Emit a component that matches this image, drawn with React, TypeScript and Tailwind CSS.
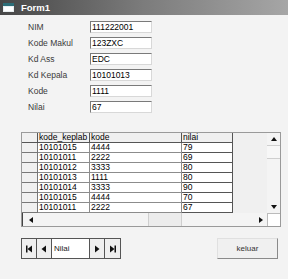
import React from "react";

const rows = [
  ["10101015", "4444", "79"],
  ["10101011", "2222", "69"],
  ["10101012", "3333", "80"],
  ["10101013", "1111", "80"],
  ["10101014", "3333", "90"],
  ["10101015", "4444", "70"],
  ["10101011", "2222", "67"],
];

const fields = [
  ["NIM", "111222001"],
  ["Kode Makul", "123ZXC"],
  ["Kd Ass", "EDC"],
  ["Kd Kepala", "10101013"],
  ["Kode", "1111"],
  ["Nilai", "67"],
];

function Tri({ dir }: { dir: "l" | "r" | "u" | "d" }) {
  const pts =
    dir === "l" ? "4,0 0,3 4,6" : dir === "r" ? "0,0 4,3 0,6" : dir === "u" ? "0,4 3,0 6,4" : "0,0 6,0 3,4";
  const w = dir === "l" || dir === "r" ? 4 : 6;
  const h = dir === "l" || dir === "r" ? 6 : 4;
  return (
    <svg width={w} height={h} viewBox={`0 0 ${w} ${h}`}>
      <polygon points={pts} fill="#111" />
    </svg>
  );
}

function NavIcon({ kind }: { kind: "first" | "prev" | "next" | "last" }) {
  return (
    <svg width="8" height="8" viewBox="0 0 8 8">
      {kind === "first" && (
        <>
          <rect x="1" y="0.5" width="1.5" height="7" fill="#111" />
          <polygon points="7,0.5 2.5,4 7,7.5" fill="#111" />
        </>
      )}
      {kind === "prev" && <polygon points="6,0.5 1.5,4 6,7.5" fill="#111" />}
      {kind === "next" && <polygon points="2,0.5 6.5,4 2,7.5" fill="#111" />}
      {kind === "last" && (
        <>
          <polygon points="1,0.5 5.5,4 1,7.5" fill="#111" />
          <rect x="5.5" y="0.5" width="1.5" height="7" fill="#111" />
        </>
      )}
    </svg>
  );
}

export default function App() {
  return (
    <div
      className="w-[288px] h-[279px] bg-[#f3f3f3] overflow-hidden flex flex-col"
      style={{ fontFamily: '"Liberation Sans", Arial, sans-serif' }}
    >
      {/* Title bar */}
      <div className="h-[15px] flex items-center bg-linear-to-r from-[#474747] via-[#7c7c7c] to-[#a6a6a6] pl-[3px]">
        <svg width="11" height="9" viewBox="0 0 11 9">
          <rect x="0" y="0" width="11" height="9" fill="#e8eef0" />
          <rect x="0" y="0" width="11" height="3" fill="#2d6e78" />
          <rect x="1" y="4" width="9" height="4" fill="#ffffff" />
        </svg>
        <span className="ml-[7px] text-[9.5px] font-bold text-white leading-none">Form1</span>
      </div>

      {/* Fields */}
      <div className="flex flex-col pl-[28px] pt-[4px]">
        {fields.map(([l, v]) => (
          <div key={l} className="flex items-center h-[16px]">
            <div className="w-[62px] text-[8.5px] text-[#3a3a3a] leading-none">{l}</div>
            <div className="w-[62px] h-[12px] bg-white border border-t-[#7a7a7a] border-l-[#7a7a7a] border-b-[#d8d8d8] border-r-[#d8d8d8] flex items-center pl-[1px] text-[8.5px] text-black leading-none">
              {v}
            </div>
          </div>
        ))}
      </div>

      {/* Grid */}
      <div className="ml-[21px] mt-[17px] w-[260px] border border-[#9a9a9a] bg-[#f0f0f0] flex flex-col">
        <div className="flex">
          <div className="w-[245px] flex flex-col">
            <div className="flex h-[10px] text-[8.5px] leading-[9px] text-black">
              <div className="w-[16px] border-r border-b border-[#555]" />
              <div className="w-[52px] pl-[1px] border-r border-b border-[#555] overflow-hidden whitespace-nowrap">kode_keplab</div>
              <div className="w-[92px] pl-[1px] border-r border-b border-[#555]">kode</div>
              <div className="w-[51px] pl-[1px] border-r border-b border-[#555]">nilai</div>
            </div>
            {rows.map((r, i) => (
              <div key={i} className="flex h-[10px] text-[8.5px] leading-[9px] text-black">
                <div className="w-[16px] border-r border-b border-[#777] bg-[#f0f0f0]" />
                <div className="w-[52px] pl-[1px] bg-white border-r border-b border-[#8c8c8c]">{r[0]}</div>
                <div className="w-[92px] pl-[1px] bg-white border-r border-b border-[#8c8c8c]">{r[1]}</div>
                <div className="w-[51px] pl-[1px] bg-white border-r border-b border-[#555]">{r[2]}</div>
              </div>
            ))}
          </div>
          {/* vertical scrollbar */}
          <div className="w-[13px] flex flex-col bg-[#f4f4f4]">
            <div className="h-[12px] flex items-center justify-center"><Tri dir="u" /></div>
            <div className="h-[14px] border-t border-b border-[#cfcfcf] bg-[#f7f7f7]" />
            <div className="flex-1" />
            <div className="h-[12px] flex items-center justify-center"><Tri dir="d" /></div>
          </div>
        </div>
        {/* horizontal scrollbar */}
        <div className="flex h-[13px] bg-[#f4f4f4]">
          <div className="w-[16px] flex items-center justify-center border-l border-[#444]"><Tri dir="l" /></div>
          <div className="w-[110px]" />
          <div className="w-[34px] border-l border-r border-[#cfcfcf] bg-[#ececec]" />
          <div className="flex-1" />
          <div className="w-[12px] flex items-center justify-center"><Tri dir="r" /></div>
          <div className="w-[13px] bg-white border-l border-t border-[#bbb]" />
        </div>
      </div>

      {/* Bottom row */}
      <div className="flex justify-between items-start pl-[21px] pr-[10px] mt-[11px]">
        <div className="flex h-[21px] w-[100px] border border-[#555] bg-[#efefef]">
          <div className="w-[15px] flex items-center justify-center border-r border-[#555]"><NavIcon kind="first" /></div>
          <div className="w-[15px] flex items-center justify-center border-r border-[#555]"><NavIcon kind="prev" /></div>
          <div className="w-[38px] bg-white flex items-center pl-[2px] text-[8px] text-[#222] border-r border-[#555]">Nilai</div>
          <div className="w-[15px] flex items-center justify-center border-r border-[#555]"><NavIcon kind="next" /></div>
          <div className="flex-1 flex items-center justify-center"><NavIcon kind="last" /></div>
        </div>
        <div className="w-[61px] h-[21px] bg-[#f0f0f0] border border-t-[#e0e0e0] border-l-[#e0e0e0] border-b-[#8a8a8a] border-r-[#8a8a8a] flex items-center justify-center text-[8px] text-[#333]">
          keluar
        </div>
      </div>
    </div>
  );
}
